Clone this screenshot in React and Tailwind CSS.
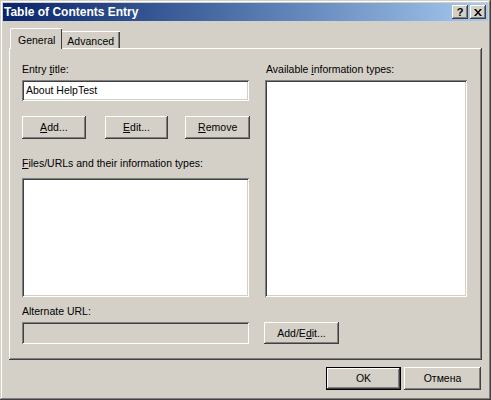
import React from 'react';

const raised =
  'bg-[#d4d0c8] shadow-[inset_-1px_-1px_#404040,inset_1px_1px_#ffffff,inset_-2px_-2px_#808080,inset_2px_2px_#d4d0c8]';
const sunken =
  'shadow-[inset_1px_1px_#808080,inset_-1px_-1px_#ffffff,inset_2px_2px_#404040,inset_-2px_-2px_#d4d0c8]';

const Btn = ({ children, className = '' }) => (
  <div className={`${raised} flex items-center justify-center ${className}`}>{children}</div>
);

const U = ({ children }) => <span className="underline underline-offset-[1px]">{children}</span>;

const App = () => {
  return (
    <div
      className="w-[491px] h-[400px] bg-[#d4d0c8] p-[3px] flex flex-col text-[10.5px] leading-[13px] text-black shadow-[inset_-1px_-1px_#404040,inset_1px_1px_#d4d0c8,inset_-2px_-2px_#808080,inset_2px_2px_#ffffff]"
      style={{ fontFamily: '"Liberation Sans", Arial, sans-serif' }}
    >
      {/* title bar */}
      <div className="h-[18px] flex items-center justify-between pl-[1px] pr-[2px] bg-gradient-to-r from-[#0a246a] to-[#a6caf0]">
        <span className="text-white font-bold text-[12px]">Table of Contents Entry</span>
        <div className="flex gap-[2px]">
          <Btn className="w-[16px] h-[14px] font-bold text-[11px]">?</Btn>
          <Btn className="w-[16px] h-[14px]">
            <svg width="8" height="7" viewBox="0 0 8 7">
              <path d="M0 0h2l2 2.5L6 0h2L5 3.5 8 7H6L4 4.5 2 7H0l3-3.5z" fill="#000" />
            </svg>
          </Btn>
        </div>
      </div>

      <div className="flex flex-col px-[6px]">
        {/* tabs */}
        <div className="flex items-end h-[21px] mt-[7px] relative z-10 -mb-px">
          <div className="h-[21px] ml-px pl-[7px] pr-[7px] pt-[5px] bg-[#d4d0c8] border-l border-t border-white rounded-tl-[2px] shadow-[inset_-1px_0_#404040]">
            General
          </div>
          <div className="h-[18px] pl-[5px] pr-[6px] pt-[3px] bg-[#d4d0c8] border-t border-white shadow-[inset_-1px_0_#404040,inset_-2px_0_#808080] border-b border-b-white">
            Advanced
          </div>
        </div>

        {/* panel */}
        <div className="h-[312px] w-[473px] bg-[#d4d0c8] shadow-[inset_-1px_-1px_#404040,inset_1px_1px_#ffffff,inset_-2px_-2px_#808080] flex pl-[13px] pt-[15px]">
          <div className="w-[227px] flex flex-col">
            <div className="h-[13px]">
              Entry <U>t</U>itle:
            </div>
            <div className={`${sunken} bg-white h-[21px] mt-[4px] flex items-center pl-[4px]`}>About HelpTest</div>
            <div className="flex mt-[15px] w-[228px]">
              <Btn className="w-[64px] h-[23px]">
                <span><U>A</U>dd...</span>
              </Btn>
              <Btn className="w-[64px] h-[23px] ml-[19px]">
                <span><U>E</U>dit...</span>
              </Btn>
              <Btn className="w-[65px] h-[23px] ml-[17px]">
                <span><U>R</U>emove</span>
              </Btn>
            </div>
            <div className="h-[13px] mt-[18px]">
              <U>F</U>iles/URLs and their information types:
            </div>
            <div className={`${sunken} bg-white h-[119px] mt-[8px]`} />
            <div className="h-[13px] mt-[8px]">Alternate URL:</div>
            <div className={`${sunken} bg-[#d4d0c8] h-[22px] mt-[4px]`} />
          </div>

          <div className="w-[203px] ml-[16px] flex flex-col">
            <div className="h-[13px] pl-px">
              Available <U>i</U>nformation types:
            </div>
            <div className={`${sunken} bg-white h-[217px] w-[202px] mt-[4px]`} />
            <Btn className="w-[75px] h-[22px] mt-[25px] -ml-px">
              <span>Add/E<U>d</U>it...</span>
            </Btn>
          </div>
        </div>

        {/* footer */}
        <div className="flex justify-end gap-[3px] mt-[7px] pr-[1px]">
          <div className="w-[75px] h-[23px] border border-black flex">
            <Btn className="flex-1">OK</Btn>
          </div>
          <Btn className="w-[77px] h-[23px]">Отмена</Btn>
        </div>
      </div>
    </div>
  );
};

export default App;
